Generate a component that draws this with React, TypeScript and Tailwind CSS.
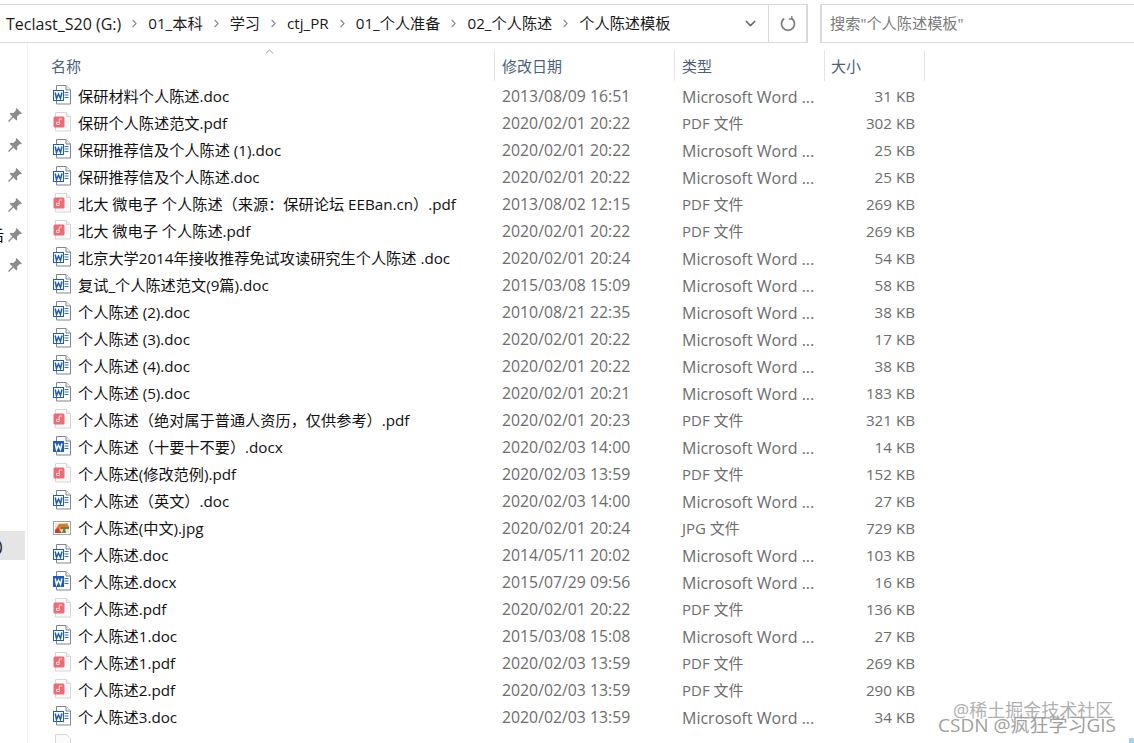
import { ChevronRight, ChevronDown, ChevronUp } from "lucide-react";

type FileKind = "word" | "wordx" | "pdf" | "jpg";

type FileRow = {
  name: string;
  date: string;
  type: string;
  size: string;
  kind: FileKind;
};

const W = "Microsoft Word ...";
const P = "PDF 文件";

const files: FileRow[] = [
  { name: "保研材料个人陈述.doc", date: "2013/08/09 16:51", type: W, size: "31 KB", kind: "word" },
  { name: "保研个人陈述范文.pdf", date: "2020/02/01 20:22", type: P, size: "302 KB", kind: "pdf" },
  { name: "保研推荐信及个人陈述 (1).doc", date: "2020/02/01 20:22", type: W, size: "25 KB", kind: "word" },
  { name: "保研推荐信及个人陈述.doc", date: "2020/02/01 20:22", type: W, size: "25 KB", kind: "word" },
  { name: "北大 微电子 个人陈述（来源：保研论坛 EEBan.cn）.pdf", date: "2013/08/02 12:15", type: P, size: "269 KB", kind: "pdf" },
  { name: "北大 微电子 个人陈述.pdf", date: "2020/02/01 20:22", type: P, size: "269 KB", kind: "pdf" },
  { name: "北京大学2014年接收推荐免试攻读研究生个人陈述 .doc", date: "2020/02/01 20:24", type: W, size: "54 KB", kind: "word" },
  { name: "复试_个人陈述范文(9篇).doc", date: "2015/03/08 15:09", type: W, size: "58 KB", kind: "word" },
  { name: "个人陈述 (2).doc", date: "2010/08/21 22:35", type: W, size: "38 KB", kind: "word" },
  { name: "个人陈述 (3).doc", date: "2020/02/01 20:22", type: W, size: "17 KB", kind: "word" },
  { name: "个人陈述 (4).doc", date: "2020/02/01 20:22", type: W, size: "38 KB", kind: "word" },
  { name: "个人陈述 (5).doc", date: "2020/02/01 20:21", type: W, size: "183 KB", kind: "word" },
  { name: "个人陈述（绝对属于普通人资历，仅供参考）.pdf", date: "2020/02/01 20:23", type: P, size: "321 KB", kind: "pdf" },
  { name: "个人陈述（十要十不要）.docx", date: "2020/02/03 14:00", type: W, size: "14 KB", kind: "wordx" },
  { name: "个人陈述(修改范例).pdf", date: "2020/02/03 13:59", type: P, size: "152 KB", kind: "pdf" },
  { name: "个人陈述（英文）.doc", date: "2020/02/03 14:00", type: W, size: "27 KB", kind: "word" },
  { name: "个人陈述(中文).jpg", date: "2020/02/01 20:24", type: "JPG 文件", size: "729 KB", kind: "jpg" },
  { name: "个人陈述.doc", date: "2014/05/11 20:02", type: W, size: "103 KB", kind: "word" },
  { name: "个人陈述.docx", date: "2015/07/29 09:56", type: W, size: "16 KB", kind: "wordx" },
  { name: "个人陈述.pdf", date: "2020/02/01 20:22", type: P, size: "136 KB", kind: "pdf" },
  { name: "个人陈述1.doc", date: "2015/03/08 15:08", type: W, size: "27 KB", kind: "word" },
  { name: "个人陈述1.pdf", date: "2020/02/03 13:59", type: P, size: "269 KB", kind: "pdf" },
  { name: "个人陈述2.pdf", date: "2020/02/03 13:59", type: P, size: "290 KB", kind: "pdf" },
  { name: "个人陈述3.doc", date: "2020/02/03 13:59", type: W, size: "34 KB", kind: "word" },
];

const crumbs = ["01_本科", "学习", "ctj_PR", "01_个人准备", "02_个人陈述", "个人陈述模板"];

const WordIcon = ({ solid }: { solid?: boolean }) => (
  <svg width="20" height="20" viewBox="0 0 20 20" className="shrink-0 -translate-y-[1px]">
    <path d="M4.500 .500h9.500l4.500 4.500v14h-14z" fill="#fff" stroke="#80858e" />
    <path d="M14 .500v4.500h4.500" fill="#eef0f3" stroke="#80858e" />
    <path d="M12.500 7.500h4M12.500 10h4M12.500 12.500h4" stroke="#2f72c9" strokeWidth="1" />
    <rect x="1.500" y="5.500" width="10" height="10" fill={solid ? "#1e5cb5" : "#fff"} stroke="#1e5cb5" />
    <path
      d="M3.200 7.500l1.300 6 2-4.500 2 4.500 1.400-6"
      fill="none"
      stroke={solid ? "#fff" : "#1e5cb5"}
      strokeWidth="1.500"
    />
  </svg>
);

const PdfIcon = () => (
  <svg width="20" height="20" viewBox="0 0 20 20" className="shrink-0 -translate-y-[1px]">
    <path d="M3.500 .500h11l4 4v14.500h-15z" fill="#fbfbfb" stroke="#d6d6d6" />
    <path d="M14.500 .500v4h4" fill="#efefef" stroke="#d6d6d6" />
    <rect x="1.500" y="4.500" width="11" height="11" rx="1.500" fill="#ee6a74" />
    <path d="M4.500 12.500h2.700v-5.500h3M7.200 10.300H4.500v2.200" fill="none" stroke="#fbd5d8" strokeWidth="1" />
  </svg>
);

const JpgIcon = () => (
  <svg width="20" height="20" viewBox="0 0 20 20" className="shrink-0">
    <rect x="1.500" y="3.500" width="17" height="13" fill="#fff" stroke="#a5a5a5" />
    <rect x="3" y="5" width="14" height="10" fill="#efe9d8" />
    <path d="M3 12l4-6 8-.5 2 3v2l-9 1z" fill="#e0762a" />
    <path d="M3 15v-3l3-2 4 5z" fill="#c8402a" />
    <path d="M10 15l1.500-5h1.500l1 5zM9 9h8v2H9z" fill="#6f7f3c" />
  </svg>
);

const BlankIcon = () => (
  <svg width="20" height="20" viewBox="0 0 20 20" className="shrink-0 -translate-y-[1px]">
    <path d="M3.500 .500h11l4 4v14.500h-15z" fill="#fbfbfb" stroke="#d6d6d6" />
  </svg>
);

const PinIcon = () => (
  <svg width="16" height="16" viewBox="0 0 16 16" className="shrink-0">
    <path d="M9.500 1l5.500 5.500-1.300.8-.9-.4-2.700 2.700.2 2.800-1 1-2.900-2.900L2 15l-1-1 4.500-4.400-2.900-2.900 1-1 2.800.2 2.700-2.700-.4-.9z" fill="#8c8c8c" />
  </svg>
);

const RefreshIcon = () => (
  <svg width="16" height="17" viewBox="0 0 16 17" fill="none" stroke="#7d7d7d" strokeWidth="1.800">
    <path d="M4.200 3.600a6.500 6.500 0 1 0 7.600 0" />
    <path d="M11.800 1v3h-3" strokeWidth="1.300" />
  </svg>
);

const FileIcon = ({ kind }: { kind: FileKind }) => {
  if (kind === "pdf") return <PdfIcon />;
  if (kind === "jpg") return <JpgIcon />;
  return <WordIcon solid={kind === "wordx"} />;
};

const Sidebar = () => (
  <div className="w-[28px] shrink-0 h-full border-r border-[#f2f2f2] flex flex-col relative overflow-hidden">
    <div className="flex flex-col items-center gap-[14px] pt-[64px] pl-[2px]">
      {[0, 1, 2, 3, 4, 5].map((i) => (
        <PinIcon key={i} />
      ))}
    </div>
    <span className="absolute left-[-11px] top-[182px] text-[15px] leading-5 text-black">后</span>
    <div className="absolute left-0 top-[488px] h-[29px] w-[25px] bg-[#e5e5e5] text-[15px] leading-[29px] text-black">
      <span className="block ml-[-2px]">)</span>
    </div>
  </div>
);

const ColumnHeader = ({ label, className }: { label: string; className: string }) => (
  <div className={`h-[31px] border-r border-[#e5e5e5] text-[15px] leading-[32px] text-[#4c607a] ${className}`}>
    {label}
  </div>
);

export default function App() {
  return (
    <div
      className="relative w-[1134px] h-[743px] overflow-hidden bg-white text-[15.200px]"
      style={{ fontFamily: '"Open Sans", "Noto Sans CJK SC", sans-serif' }}
    >
      <div className="h-[43px] pt-[4px] flex items-stretch">
        <div className="w-[808px] border-y border-r-2 border-[#d9d9d9] flex items-center pl-[6px] text-[#1a1a1a]">
          <div className="flex items-center flex-1 min-w-0 whitespace-nowrap">
            <span className="text-[16px]">Teclast_S20 (G:)</span>
            {crumbs.map((c) => (
              <div key={c} className="flex items-center">
                <ChevronRight size={13} strokeWidth={2} className="mx-[7px] text-[#8a8a8a]" />
                <span>{c}</span>
              </div>
            ))}
          </div>
          <ChevronDown size={17} strokeWidth={2} className="mr-[9px] text-[#6b6b6b]" />
          <div className="w-[38px] h-full border-l border-[#d9d9d9] flex items-center justify-center">
            <RefreshIcon />
          </div>
        </div>
        <div className="ml-[12px] flex-1 border-y border-l-2 border-[#d9d9d9] flex items-center pl-[8px] text-[#7b7b7b]">
          搜索"个人陈述模板"
        </div>
      </div>

      <div className="flex h-[700px]">
        <Sidebar />
        <div className="flex-1 relative">
          <ChevronUp size={13} strokeWidth={1.500} className="absolute left-[235px] top-[2px] text-[#808080]" />
          <div className="pt-[7px] flex">
            <ColumnHeader label="名称" className="w-[467px] pl-[23px]" />
            <ColumnHeader label="修改日期" className="w-[180px] pl-[7px]" />
            <ColumnHeader label="类型" className="w-[150px] pl-[7px]" />
            <ColumnHeader label="大小" className="w-[100px] pl-[6px]" />
          </div>
          <div className="pt-[2px]">
            {files.map((f) => (
              <div key={f.name} className="h-[27px] flex items-center whitespace-nowrap">
                <div className="w-[467px] pl-[24px] flex items-center gap-[6px] text-[#111]">
                  <FileIcon kind={f.kind} />
                  <span>{f.name}</span>
                </div>
                <div className="w-[180px] pl-[7px] text-[15.800px] text-[#6d6d6d]">{f.date}</div>
                <div className={`w-[150px] pl-[7px] text-[#6d6d6d] ${f.type === W ? "text-[16px]" : "text-[15px]"}`}>
                  {f.type}
                </div>
                <div className="w-[90px] text-right text-[#6d6d6d]">{f.size}</div>
              </div>
            ))}
            <div className="h-[27px] pl-[24px] flex items-center">
              <BlankIcon />
            </div>
          </div>
        </div>
      </div>

      <div className="absolute left-[953px] top-[700px] text-[18px] leading-5 text-[#b0b0b0] whitespace-nowrap">
        @稀土掘金技术社区
      </div>
      <div className="absolute left-[938px] top-[715px] text-[19px] leading-5 text-[#a0a0a0] whitespace-nowrap">
        CSDN @疯狂学习GIS
      </div>
      <div className="absolute left-[1129px] top-[738px] w-[5px] h-[5px] bg-[#9fd4f0]" />
    </div>
  );
}
